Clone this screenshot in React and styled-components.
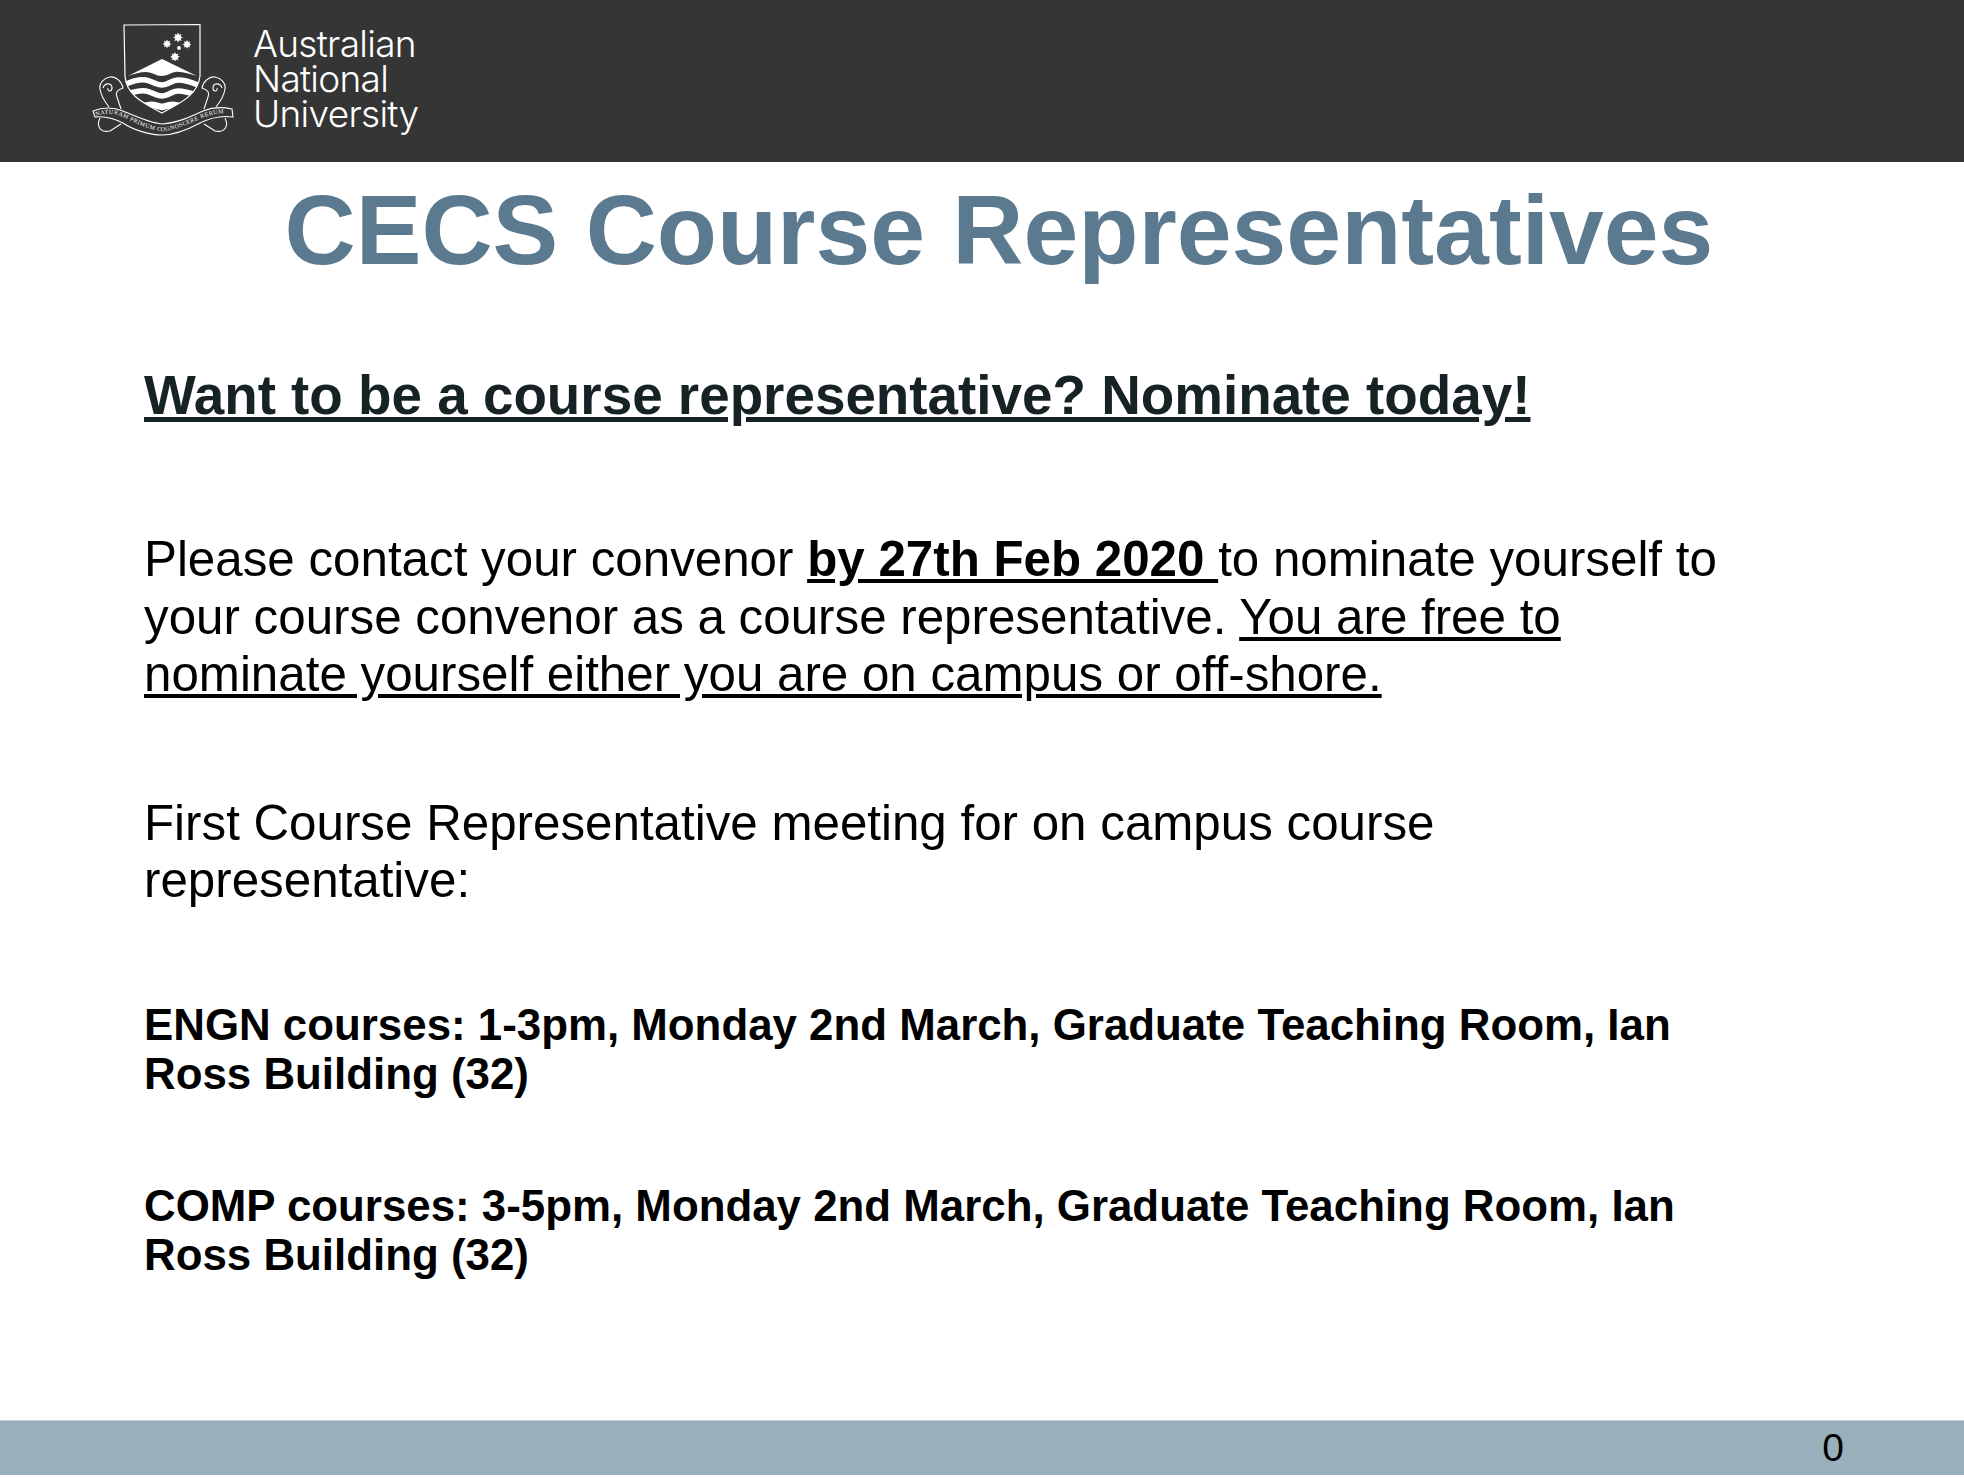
import React from "react";
import styled, { createGlobalStyle } from "styled-components";

const GlobalStyle = createGlobalStyle`
  html, body {
    margin: 0;
    padding: 0;
    background: #ffffff;
  }
  body {
    font-family: "Liberation Sans", Arial, sans-serif;
  }
`;

const Page = styled.div`
  width: 1964px;
  height: 1478px;
  display: flex;
  flex-direction: column;
  overflow: hidden;
`;

const Header = styled.header`
  height: 162px;
  flex: none;
  background: #353535;
  display: flex;
  align-items: flex-start;
  padding: 20px 0 0 90px;
  box-sizing: border-box;
`;

const Crest = styled.svg`
  width: 150px;
  height: 120px;
  flex: none;
`;

const Wordmark = styled.div`
  margin: 6px 0 0 13px;
  font-family: Inter, "Liberation Sans", sans-serif;
  font-weight: 300;
  font-size: 37px;
  line-height: 35px;
  letter-spacing: -0.7px;
  color: #ffffff;
`;

const Title = styled.h1`
  margin: 13px 0 0;
  padding-left: 34px;
  text-align: center;
  font-size: 98.5px;
  line-height: 110px;
  font-weight: 700;
  color: #5b7a8f;
`;

const Content = styled.main`
  flex: 1;
  padding: 0 0 0 144px;
`;

const Lead = styled.h2`
  margin: 0;
  padding-top: 80px;
  font-size: 54.8px;
  line-height: 60px;
  font-weight: 700;
  color: #162224;
  text-decoration: underline;
`;

const Para = styled.p`
  margin: ${({ $top }) => $top}px 0 0;
  font-size: 49.3px;
  line-height: 57.6px;
  color: #000000;
`;

const Strong = styled.strong`
  font-weight: 700;
  text-decoration: underline;
`;

const Under = styled.span`
  text-decoration: underline;
`;

const Note = styled.p`
  margin: ${({ $top }) => $top}px 0 0;
  font-size: 43.85px;
  line-height: 49px;
  font-weight: 700;
  color: #000000;
`;

const Footer = styled.footer`
  height: 55px;
  flex: none;
  margin-bottom: 3px;
  background: #9aafbc;
  border-top: 1px solid #c3d0d8;
  box-sizing: border-box;
  display: flex;
  justify-content: flex-end;
  align-items: center;
  padding-right: 120px;
  font-size: 39px;
  color: #000000;
`;

const Scroll = () => (
  <>
    <path d="M20 57 C14 58 9 63 10 69 C11 76 15 82 19 87" />
    <path d="M20 57 C26 56 32 62 33 68 C27 70 25 73 27 77 L31 89" />
    <path d="M13 68 C15 62 22 63 22 68 C22 72 17 72 18 68" />
    <path d="M10 98 C6 106 10 113 20 111 L31 104" />
  </>
);

const Logo = () => (
  <Crest viewBox="0 0 150 120" fill="none">
    <defs>
      <clipPath id="shield">
        <path d="M34 5 L110 4.500 L110 56 C108 76 88 84 72 93 C56 84 36 76 35 56 Z" />
      </clipPath>
    </defs>
    <path d="M34 5 L110 4.500 L110 56 C108 76 88 84 72 93 C56 84 36 76 35 56 Z" stroke="#fff" strokeWidth="1.2" />
    <g fill="#fff">
      <path d="M88 12.500 l1.100 2.300 2.400-.8 -.8 2.400 2.300 1.100 -2.300 1.100 .8 2.400 -2.400-.8 -1.100 2.300 -1.100-2.300 -2.400.8 .8-2.400 -2.300-1.100 2.300-1.100 -.8-2.400 2.400.8z" />
      <path d="M77 19.500 l1 2 2.100-.7 -.7 2.100 2 1 -2 1 .7 2.100 -2.100-.7 -1 2 -1-2 -2.100.7 .7-2.100 -2-1 2-1 -.7-2.100 2.100.7z" />
      <path d="M97 20 l1 2 2.100-.7 -.7 2.100 2 1 -2 1 .7 2.100 -2.100-.7 -1 2 -1-2 -2.100.7 .7-2.100 -2-1 2-1 -.7-2.100 2.100.7z" />
      <path d="M85 32 l1.100 2.200 2.300-.8 -.8 2.300 2.200 1.100 -2.200 1.100 .8 2.300 -2.300-.8 -1.100 2.200 -1.100-2.200 -2.300.8 .8-2.300 -2.200-1.100 2.200-1.100 -.8-2.300 2.300.8z" />
      <circle cx="89" cy="28" r="1.900" />
      <path d="M72 39 L107 56 C99 54 92 51 85 52 C80 53 77 56 72 56 C66 56 62 52 56 52 C50 52 44 54 38 56 Z" />
    </g>
    <g clipPath="url(#shield)" stroke="#fff" strokeWidth="5.500">
      <path d="M36 64 C43 61 50 59 56 60 C62 61 66 65 72 65 C78 65 82 60 88 60 C94 60 101 62 108 65" />
      <path d="M34 75 C43 72 50 70 56 71 C62 72 66 76 72 76 C78 76 82 71 88 71 C94 71 101 73 110 76" />
      <path d="M52 87 C60 83 65 85 72 87 C79 85 84 83 92 87" strokeWidth="6.500" />
    </g>
    <g stroke="#fff" strokeWidth="1.100" fill="#353535">
      <path d="M3 91 C13 87 23 87 33 91 C47 97 60 103 72 104 C87 103 100 97 113 91 C123 87 133 87 142 89 L143 97 C130 95 120 98 110 103 C97 110 83 115 72 115 C60 115 43 110 33 103 C23 98 13 96 5 97 Z" />
    </g>
    <g stroke="#fff" strokeWidth="1.100">
      <Scroll />
      <g transform="translate(145 0) scale(-1 1)">
        <Scroll />
      </g>
    </g>
    <path id="motto" d="M6 96 C15 93 25 93 33 97 C47 104 60 110 72 111.500 C85 110 98 104 112 98 C122 94 132 92 141 94" />
    <text fontFamily="Liberation Serif, serif" fontSize="6" fill="#ffffff">
      <textPath href="#motto" textLength="134">NATURAM PRIMUM COGNOSCERE RERUM</textPath>
    </text>
  </Crest>
);

const App = () => (
  <>
    <GlobalStyle />
    <Page>
      <Header>
        <Logo />
        <Wordmark>
          Australian
          <br />
          National
          <br />
          University
        </Wordmark>
      </Header>
      <Title>CECS Course Representatives</Title>
      <Content>
        <Lead>Want to be a course representative? Nominate today!</Lead>
        <Para $top={105}>
          Please contact your convenor <Strong>by 27th Feb 2020 </Strong>to nominate yourself to
          <br />
          your course convenor as a course representative. <Under>You are free to</Under>
          <br />
          <Under>nominate yourself either you are on campus or off-shore.</Under>
        </Para>
        <Para $top={91}>
          First Course Representative meeting for on campus course
          <br />
          representative:
        </Para>
        <Note $top={91}>
          ENGN courses: 1-3pm, Monday 2nd March, Graduate Teaching Room, Ian
          <br />
          Ross Building (32)
        </Note>
        <Note $top={83}>
          COMP courses: 3-5pm, Monday 2nd March, Graduate Teaching Room, Ian
          <br />
          Ross Building (32)
        </Note>
      </Content>
      <Footer>0</Footer>
    </Page>
  </>
);

export default App;
